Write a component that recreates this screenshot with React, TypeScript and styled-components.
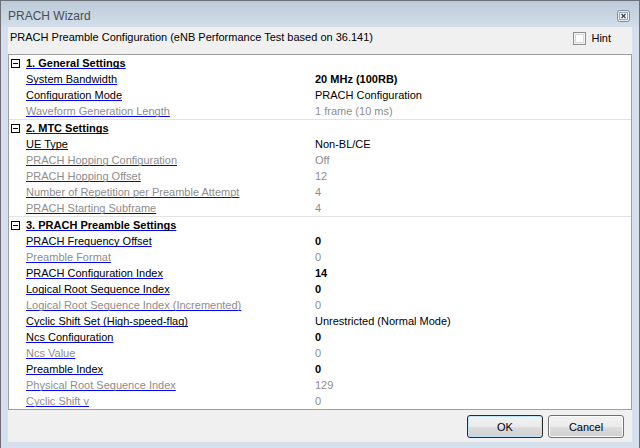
import React from 'react';
import styled, { createGlobalStyle } from 'styled-components';

type Item = {
  label: string;
  value: string;
  disabled?: boolean;
  bold?: boolean;
};

type Section = {
  title: string;
  items: Item[];
};

const sections: Section[] = [
  {
    title: '1. General Settings',
    items: [
      { label: 'System Bandwidth', value: '20 MHz (100RB)', bold: true },
      { label: 'Configuration Mode', value: 'PRACH Configuration' },
      { label: 'Waveform Generation Length', value: '1 frame (10 ms)', disabled: true },
    ],
  },
  {
    title: '2. MTC Settings',
    items: [
      { label: 'UE Type', value: 'Non-BL/CE' },
      { label: 'PRACH Hopping Configuration', value: 'Off', disabled: true },
      { label: 'PRACH Hopping Offset', value: '12', disabled: true },
      { label: 'Number of Repetition per Preamble Attempt', value: '4', disabled: true },
      { label: 'PRACH Starting Subframe', value: '4', disabled: true },
    ],
  },
  {
    title: '3. PRACH Preamble Settings',
    items: [
      { label: 'PRACH Frequency Offset', value: '0', bold: true },
      { label: 'Preamble Format', value: '0', disabled: true },
      { label: 'PRACH Configuration Index', value: '14', bold: true },
      { label: 'Logical Root Sequence Index', value: '0', bold: true },
      { label: 'Logical Root Sequence Index (Incremented)', value: '0', disabled: true },
      { label: 'Cyclic Shift Set (High-speed-flag)', value: 'Unrestricted (Normal Mode)' },
      { label: 'Ncs Configuration', value: '0', bold: true },
      { label: 'Ncs Value', value: '0', disabled: true },
      { label: 'Preamble Index', value: '0', bold: true },
      { label: 'Physical Root Sequence Index', value: '129', disabled: true },
      { label: 'Cyclic Shift v', value: '0', disabled: true },
    ],
  },
];

const GlobalStyle = createGlobalStyle`
  html, body {
    margin: 0;
    padding: 0;
    background: #ffffff;
  }
  * {
    box-sizing: border-box;
  }
`;

const Window = styled.div`
  width: 640px;
  height: 448px;
  display: flex;
  flex-direction: column;
  border: 1px solid #6d7078;
  background: #d5e0ec;
  font-family: 'Liberation Sans', Arial, sans-serif;
  font-size: 11px;
  color: #000;
`;

const TitleBar = styled.div`
  height: 26px;
  flex-shrink: 0;
  display: flex;
  align-items: center;
  justify-content: space-between;
  padding: 4px 9px 0 7px;
  background: linear-gradient(#bccad9, #d3deea);
`;

const Title = styled.span`
  font-size: 12px;
  color: #474d55;
`;

const CloseBox = styled.div`
  width: 13px;
  height: 12px;
  display: flex;
`;

const Frame = styled.div`
  flex: 1;
  display: flex;
  padding: 0 7px 7px 7px;
  background: #d5e0ec;
`;

const Client = styled.div`
  flex: 1;
  display: flex;
  flex-direction: column;
  background: #f0f0f0;
`;

const Header = styled.div`
  height: 27px;
  flex-shrink: 0;
  display: flex;
  align-items: flex-start;
  justify-content: space-between;
  padding: 2px 21px 0 2px;
  line-height: 16px;
`;

const HintLabel = styled.label`
  display: flex;
  align-items: center;
  gap: 5px;
  margin-top: 1px;
`;

const CheckBox = styled.span`
  width: 13px;
  height: 13px;
  border: 1px solid #8e8f8f;
  background: #ffffff;
  box-shadow: inset 0 0 0 1px #f4f4f4, inset 0 0 0 2px #d8d8d8;
  display: inline-block;
`;

const Grid = styled.div`
  flex: 1;
  border: 1px solid #a0a0a0;
  background: #ffffff;
  overflow: hidden;
`;

const SectionBlock = styled.div`
  & + & {
    border-top: 1px solid #e3e3e3;
  }
`;

const Row = styled.div`
  height: 16px;
  line-height: 16px;
  display: flex;
  align-items: center;
  white-space: nowrap;
`;

const Toggle = styled.span`
  width: 9px;
  height: 9px;
  margin: 0 6px 0 2px;
  border: 1px solid #000;
  position: relative;
  flex-shrink: 0;

  &::after {
    content: '';
    position: absolute;
    left: 1px;
    right: 1px;
    top: 3px;
    height: 1px;
    background: #000;
  }
`;

const SectionTitle = styled.span`
  font-weight: bold;
  text-decoration: underline;
  text-decoration-color: #0000ff;
  text-decoration-skip-ink: none;
`;

const NameCell = styled.div`
  width: 306px;
  padding-left: 17px;
  flex-shrink: 0;
`;

const Name = styled.span<{ $disabled?: boolean }>`
  color: ${(p) => (p.$disabled ? '#8d8d8d' : '#000000')};
  text-decoration: underline;
  text-decoration-color: #0000ff;
  text-decoration-skip-ink: none;
`;

const Value = styled.span<{ $disabled?: boolean; $bold?: boolean }>`
  color: ${(p) => (p.$disabled ? '#8d8d8d' : '#000000')};
  font-weight: ${(p) => (p.$bold ? 'bold' : 'normal')};
`;

const Footer = styled.div`
  height: 32px;
  flex-shrink: 0;
  display: flex;
  justify-content: flex-end;
  align-items: flex-start;
  gap: 5px;
  padding: 5px 8px 0 0;
`;

const Button = styled.button<{ $default?: boolean }>`
  width: 76px;
  height: 23px;
  padding: 0;
  font-family: 'Liberation Sans', Arial, sans-serif;
  font-size: 11px;
  color: #000;
  border: 1px solid ${(p) => (p.$default ? '#2a2a2a' : '#707070')};
  border-radius: 3px;
  background: linear-gradient(#f2f2f2 0%, #ebebeb 50%, #dddddd 51%, #cfcfcf 100%);
  box-shadow: inset 0 0 0 1px ${(p) => (p.$default ? '#bfe4f9' : '#fcfcfc')};
`;

const CloseIcon = () => (
  <svg width="13" height="12" viewBox="0 0 13 12">
    <rect x="0.5" y="0.5" width="12" height="11" rx="2" fill="#e4ebf3" stroke="#7f8ea3" />
    <rect x="2.5" y="2.5" width="8" height="7" fill="#f3f6fa" stroke="#9aa6b6" />
    <path d="M4.5 4 L8.5 8 M8.5 4 L4.5 8" stroke="#3e4650" strokeWidth="1.4" />
  </svg>
);

const App: React.FC = () => {
  return (
    <>
      <GlobalStyle />
      <Window>
        <TitleBar>
          <Title>PRACH Wizard</Title>
          <CloseBox>
            <CloseIcon />
          </CloseBox>
        </TitleBar>
        <Frame>
          <Client>
            <Header>
              <span>PRACH Preamble Configuration (eNB Performance Test based on 36.141)</span>
              <HintLabel>
                <CheckBox />
                Hint
              </HintLabel>
            </Header>
            <Grid>
              {sections.map((section) => (
                <SectionBlock key={section.title}>
                  <Row>
                    <Toggle />
                    <SectionTitle>{section.title}</SectionTitle>
                  </Row>
                  {section.items.map((item) => (
                    <Row key={item.label}>
                      <NameCell>
                        <Name $disabled={item.disabled}>{item.label}</Name>
                      </NameCell>
                      <Value $disabled={item.disabled} $bold={item.bold}>
                        {item.value}
                      </Value>
                    </Row>
                  ))}
                </SectionBlock>
              ))}
            </Grid>
            <Footer>
              <Button $default>OK</Button>
              <Button>Cancel</Button>
            </Footer>
          </Client>
        </Frame>
      </Window>
    </>
  );
};

export default App;
